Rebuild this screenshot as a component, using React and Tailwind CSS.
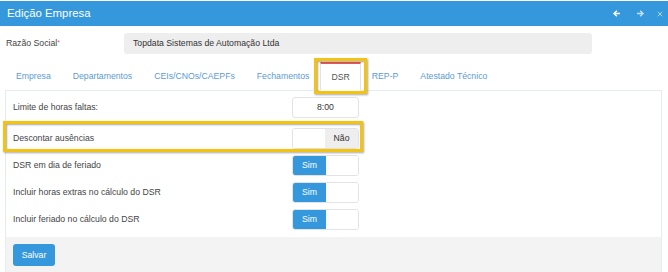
import React from "react"

const tabs = ["Empresa", "Departamentos", "CEIs/CNOs/CAEPFs", "Fechamentos", "DSR", "REP-P", "Atestado Técnico"]

function Toggle({ on }) {
  return (
    <div className="flex w-[67px] h-[21px] rounded-[3px] border border-[#e3e3e3] overflow-hidden bg-white">
      {on ? (
        <>
          <div className="w-[33px] bg-[#3598dc] text-white flex items-center justify-center">Sim</div>
          <div className="flex-1 bg-white" />
        </>
      ) : (
        <>
          <div className="w-[32px] bg-white" />
          <div className="flex-1 bg-[#eeeeee] text-[#333] flex items-center justify-center">Não</div>
        </>
      )}
    </div>
  )
}

function Row({ label, children, className = "" }) {
  return (
    <div className={"relative flex items-center h-[21px] " + className}>
      <div className="w-[286px] pl-[7px] text-[#444]">{label}</div>
      {children}
    </div>
  )
}

function Arrow({ dir, className }) {
  return (
    <svg viewBox="0 0 8 8" className={className} fill="currentColor">
      {dir === "left" ? (
        <path d="M0 4 L3.8 0.2 L5 1.4 L3.1 3.2 H8 V4.8 H3.1 L5 6.6 L3.8 7.8 Z" />
      ) : (
        <path d="M8 4 L4.2 0.2 L3 1.4 L4.9 3.2 H0 V4.8 H4.9 L3 6.6 L4.2 7.8 Z" />
      )}
    </svg>
  )
}

export default function App() {
  return (
    <div className="w-[668px] h-[272px] bg-white overflow-hidden font-['Liberation_Sans',Arial,sans-serif] text-[8.7px] leading-none">
      <div className="mt-[1px] h-[25px] bg-[#3598dc] flex items-center justify-between pl-[7px] pr-[5px]">
        <span className="text-white text-[11.4px]">Edição Empresa</span>
        <div className="flex items-center text-white">
          <Arrow dir="left" className="w-[7px] h-[7px]" />
          <Arrow dir="right" className="ml-[17px] w-[7px] h-[7px] opacity-70" />
          <svg viewBox="0 0 8 8" className="ml-[13px] w-[6px] h-[6px] opacity-70" stroke="currentColor" strokeWidth="1.1">
            <path d="M1 1 L7 7 M7 1 L1 7" />
          </svg>
        </div>
      </div>

      <div className="mt-[7px] flex items-center h-[21px]">
        <div className="w-[124px] pl-[6px] text-[#444]">
          Razão Social<span className="text-[#e35b5a] text-[7px] align-top">*</span>
        </div>
        <div className="w-[468px] h-full rounded-[3px] bg-[#eeeeee] flex items-center pl-[9px] text-[#333]">
          Topdata Sistemas de Automação Ltda
        </div>
      </div>

      <div className="mt-[8px] flex pl-[5px] h-[29px] relative z-10">
        {tabs.map((t) =>
          t === "DSR" ? (
            <div key={t} className="relative">
              <div className="h-[29px] px-[10px] bg-white border border-[#e3e3e3] border-b-white border-t-2 border-t-[#e35b5a] flex items-center text-[#555]">
                {t}
              </div>
              <span className="absolute left-[-6px] right-[-6px] top-[-4px] bottom-[-3px] border-[3px] border-[#f2c311] shadow-[1px_1px_2px_rgba(0,0,0,0.35),inset_1px_1px_2px_rgba(0,0,0,0.35)]" />
            </div>
          ) : (
            <div key={t} className="h-[29px] px-[11px] flex items-center text-[#5b9bd5]">
              {t}
            </div>
          )
        )}
      </div>

      <div className="-mt-[1px] ml-[5px] w-[657px] border border-[#e7ecf1] h-[200px]">
        <div className="pt-[6px]">
          <Row label="Limite de horas faltas:">
            <div className="w-[67px] h-[21px] rounded-[3px] border border-[#e3e3e3] flex items-center justify-center text-[#333]">8:00</div>
          </Row>
          <Row label="Descontar ausências" className="mt-[10px]">
            <Toggle on={false} />
            <span className="absolute left-[-3px] w-[360px] top-[-7px] bottom-[-3px] border-[3px] border-[#f2c311] shadow-[1px_1px_2px_rgba(0,0,0,0.35),inset_1px_1px_2px_rgba(0,0,0,0.35)]" />
          </Row>
          <Row label="DSR em dia de feriado" className="mt-[6px]">
            <Toggle on />
          </Row>
          <Row label="Incluir horas extras no cálculo do DSR" className="mt-[6px]">
            <Toggle on />
          </Row>
          <Row label="Incluir feriado no cálculo do DSR" className="mt-[6px]">
            <Toggle on />
          </Row>
        </div>
        <div className="mt-[7px] bg-[#f3f3f3] h-[60px] pl-[7px] pt-[7px]">
          <button className="w-[42px] h-[22px] rounded-[3px] bg-[#3598dc] text-white">Salvar</button>
        </div>
      </div>
    </div>
  )
}
